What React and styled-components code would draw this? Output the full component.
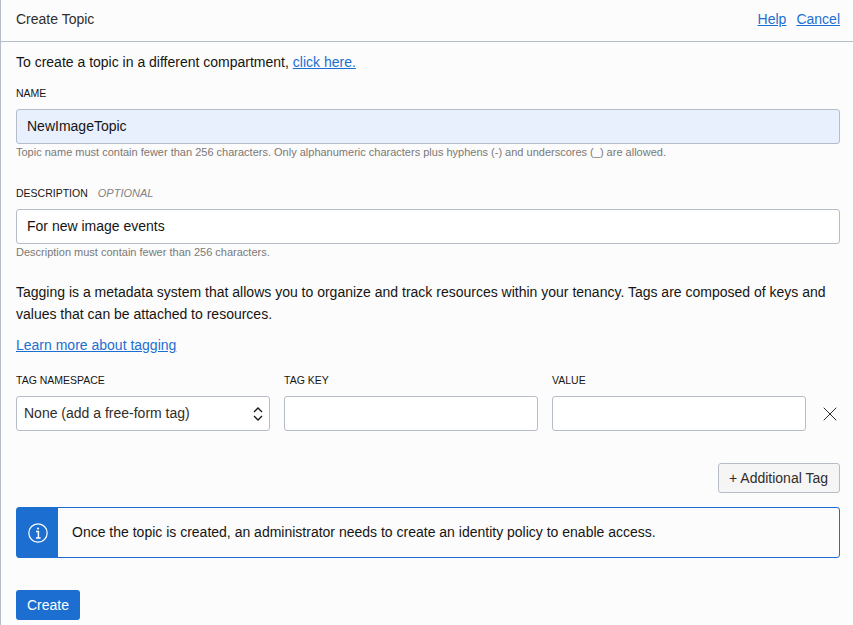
import React from "react";
import styled, { createGlobalStyle } from "styled-components";
import { X } from "lucide-react";

const GlobalStyle = createGlobalStyle`
  html, body {
    margin: 0;
    padding: 0;
    height: 100%;
    overflow: hidden;
    background: #fcfcfc;
  }

  * {
    box-sizing: border-box;
  }
`;

const Panel = styled.div`
  height: 625px;
  border-left: 1px solid #b6bcc8;
  font-family: "Liberation Sans", Arial, sans-serif;
  font-size: 14px;
  color: #161513;
  background: #fcfcfc;
`;

const Header = styled.header`
  display: flex;
  justify-content: space-between;
  align-items: center;
  height: 42px;
  padding: 0 13px 3px 15px;
  border-bottom: 1px solid #b6bcc8;
`;

const Title = styled.h1`
  margin: 0;
  font-size: 14px;
  font-weight: 400;
  color: #312d2a;
`;

const HeaderLinks = styled.div`
  display: flex;
  gap: 10px;
`;

const TextLink = styled.a`
  color: #1c6fd0;
  text-decoration: underline;
  cursor: pointer;
`;

const Body = styled.div`
  padding: 12px 13px 0 15px;
`;

const Intro = styled.p`
  margin: 0;
  line-height: 16px;
`;

const Field = styled.div`
  margin-top: ${(props) => props.$top}px;
`;

const Label = styled.label`
  display: block;
  height: 12px;
  margin-bottom: 9px;
  font-size: 10.5px;
  line-height: 10px;
  text-transform: uppercase;
  color: #161513;
`;

const Optional = styled.span`
  margin-left: 10px;
  font-size: 11px;
  font-style: italic;
  color: #85827f;
`;

const Input = styled.input`
  display: block;
  width: 100%;
  height: 35px;
  padding: 0 10px 2px;
  border: 1px solid #b6bcc8;
  border-radius: 3px;
  outline: none;
  font: inherit;
  color: #161513;
  background: ${(props) => (props.$autofilled ? "#e8f0fe" : "#fff")};
`;

const Hint = styled.div`
  margin-top: 2px;
  font-size: 11px;
  line-height: 13px;
  color: #7b7875;
`;

const TagsText = styled.p`
  margin: 0;
  line-height: 22px;
`;

const TagsLink = styled.div`
  margin-top: 12px;
  line-height: 16px;
`;

const TagGrid = styled.div`
  display: grid;
  grid-template-columns: 254px 254px 254px 1fr;
  column-gap: 14px;
  margin-top: 22px;
`;

const TagColumn = styled.div`
  min-width: 0;
`;

const SelectWrap = styled.div`
  position: relative;
  height: 35px;
`;

const Select = styled.select`
  width: 100%;
  height: 35px;
  padding: 0 24px 2px 7px;
  border: 1px solid #b6bcc8;
  border-radius: 3px;
  outline: none;
  appearance: none;
  font: inherit;
  color: #312d2a;
  background: #fff;
`;

const SelectArrows = styled.svg`
  position: absolute;
  top: 10px;
  right: 7px;
  width: 10px;
  height: 16px;
  pointer-events: none;
`;

const RemoveButton = styled.button`
  display: flex;
  align-items: center;
  justify-content: center;
  align-self: end;
  width: 20px;
  height: 35px;
  padding: 0;
  border: none;
  color: #161513;
  background: none;

  svg {
    flex-shrink: 0;
  }
`;

const ButtonRow = styled.div`
  display: flex;
  justify-content: flex-end;
  margin-top: 32px;
`;

const SecondaryButton = styled.button`
  height: 30px;
  width: 122px;
  padding: 0 1px 0 0;
  border: 1px solid #b6bcc8;
  border-radius: 3px;
  font: inherit;
  color: #312d2a;
  background: #f5f5f5;
`;

const Alert = styled.div`
  display: flex;
  align-items: stretch;
  height: 51px;
  margin-top: 14px;
  border: 1px solid #1c6fd0;
  border-radius: 3px;
  background: #fcfcfc;
`;

const AlertIcon = styled.div`
  display: flex;
  align-items: center;
  justify-content: center;
  flex: 0 0 41px;
  color: #fff;
  background: #1c6fd0;
`;

const AlertText = styled.div`
  display: flex;
  align-items: center;
  padding-left: 14px;
  padding-bottom: 2px;
  color: #161513;
`;

const PrimaryButton = styled.button`
  display: block;
  width: 64px;
  height: 30px;
  margin-top: 32px;
  padding: 0;
  border: none;
  border-radius: 3px;
  font: inherit;
  color: #fff;
  background: #1c6fd0;
`;

function InfoIcon() {
  return (
    <svg width="20" height="20" viewBox="0 0 20 20" fill="none" stroke="currentColor">
      <circle cx="10" cy="10" r="9.2" strokeWidth="1.2" />
      <path d="M8 8.5h2.4V15M8 15h4.6" strokeWidth="1.5" />
      <circle cx="10" cy="5.5" r="1.1" fill="currentColor" stroke="none" />
    </svg>
  );
}

export default function App() {
  return (
    <Panel>
      <GlobalStyle />
      <Header>
        <Title>Create Topic</Title>
        <HeaderLinks>
          <TextLink>Help</TextLink>
          <TextLink>Cancel</TextLink>
        </HeaderLinks>
      </Header>
      <Body>
        <Intro>
          To create a topic in a different compartment, <TextLink>click here.</TextLink>
        </Intro>
        <Field $top={18}>
          <Label>Name</Label>
          <Input $autofilled value="NewImageTopic" readOnly />
          <Hint>
            Topic name must contain fewer than 256 characters. Only alphanumeric characters plus
            hyphens (-) and underscores (_) are allowed.
          </Hint>
        </Field>
        <Field $top={29}>
          <Label>
            Description<Optional>Optional</Optional>
          </Label>
          <Input value="For new image events" readOnly />
          <Hint>Description must contain fewer than 256 characters.</Hint>
        </Field>
        <Field $top={22}>
          <TagsText>
            Tagging is a metadata system that allows you to organize and track resources within your
            tenancy. Tags are composed of keys and values that can be attached to resources.
          </TagsText>
          <TagsLink>
            <TextLink>Learn more about tagging</TextLink>
          </TagsLink>
        </Field>
        <TagGrid>
          <TagColumn>
            <Label>Tag Namespace</Label>
            <SelectWrap>
              <Select defaultValue="none">
                <option value="none">None (add a free-form tag)</option>
              </Select>
              <SelectArrows viewBox="0 0 10 16" fill="none" stroke="#161513" strokeWidth="1.3">
                <path d="M1 6l4-4 4 4M1 10l4 4 4-4" />
              </SelectArrows>
            </SelectWrap>
          </TagColumn>
          <TagColumn>
            <Label>Tag Key</Label>
            <Input readOnly />
          </TagColumn>
          <TagColumn>
            <Label>Value</Label>
            <Input readOnly />
          </TagColumn>
          <RemoveButton aria-label="Remove tag">
            <X size={24} strokeWidth={0.9} />
          </RemoveButton>
        </TagGrid>
        <ButtonRow>
          <SecondaryButton>+ Additional Tag</SecondaryButton>
        </ButtonRow>
        <Alert>
          <AlertIcon>
            <InfoIcon />
          </AlertIcon>
          <AlertText>
            Once the topic is created, an administrator needs to create an identity policy to enable
            access.
          </AlertText>
        </Alert>
        <PrimaryButton>Create</PrimaryButton>
      </Body>
    </Panel>
  );
}
